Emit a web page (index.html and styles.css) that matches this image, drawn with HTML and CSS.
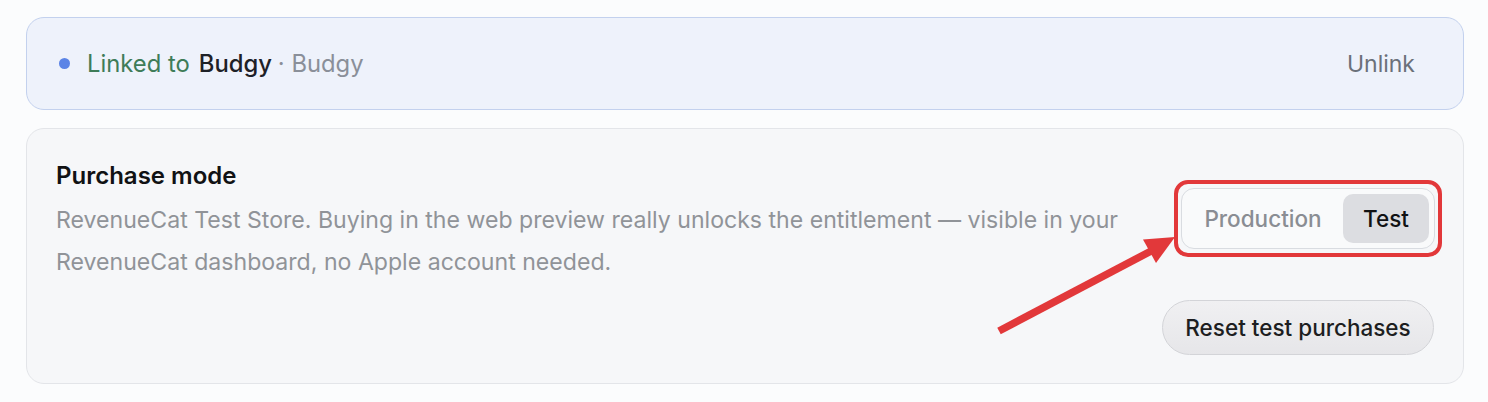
FILE: index.html
```html
<!DOCTYPE html>
<html lang="en">
<head>
<meta charset="utf-8">
<title>Purchase mode</title>
<link rel="stylesheet" href="styles.css">
</head>
<body>
<div class="page">
  <div class="link-card">
    <div class="link-status">
      <span class="dot"></span>
      <span class="linked">Linked to</span>
      <span class="app-name">Budgy</span>
      <span class="sub">· Budgy</span>
    </div>
    <button class="unlink">Unlink</button>
  </div>

  <div class="mode-card">
    <div class="mode-row">
      <div class="mode-text">
        <h2 class="mode-title">Purchase mode</h2>
        <p class="mode-desc">RevenueCat Test Store. Buying in the web preview really unlocks the entitlement — visible in your RevenueCat dashboard, no Apple account needed.</p>
      </div>
      <div class="mode-actions">
        <div class="seg-wrap">
          <div class="segmented">
            <button class="seg">Production</button>
            <button class="seg active">Test</button>
          </div>
          <div class="highlight"></div>
        </div>
        <button class="reset">Reset test purchases</button>
      </div>
    </div>
  </div>

  <svg class="arrow" width="1488" height="402" viewBox="0 0 1488 402">
    <line x1="999" y1="331" x2="1153" y2="250" stroke="#e2383a" stroke-width="7.5" stroke-linecap="butt"/>
    <polygon points="1175,237 1143,239.5 1156,263" fill="#e2383a"/>
  </svg>
</div>
</body>
</html>
```

FILE: styles.css
```css
* { box-sizing: border-box; }
html, body { margin: 0; padding: 0; }
body {
  background: #fbfcfd;
  font-family: Inter, "Noto Sans", "Liberation Sans", sans-serif;
  width: 1488px;
  height: 402px;
  overflow: hidden;
}
.page {
  position: relative;
  padding: 17px 24px 0 26px;
  display: flex;
  flex-direction: column;
  gap: 18px;
}
.link-card {
  height: 93px;
  background: #eef2fb;
  border: 1.5px solid #c3d1ee;
  border-radius: 18px;
  display: flex;
  align-items: center;
  justify-content: space-between;
  padding: 0 32px 0 32px;
}
.link-status {
  display: flex;
  align-items: center;
  font-size: 23.8px;
  white-space: pre;
}
.dot {
  width: 11px;
  height: 11px;
  border-radius: 50%;
  background: #5b84e6;
  margin-right: 17px;
}
.linked { color: #3e7c58; }
.app-name { color: #1e2127; font-weight: 500; margin-left: 9px; }
.sub { color: #8a8f99; margin-left: 6px; }
.unlink {
  background: none;
  border: none;
  font-family: inherit;
  font-size: 23px;
  color: #6b7079;
  padding: 8px 16px;
}
.mode-card {
  height: 256px;
  background: #f6f7f9;
  border: 1.5px solid #e3e5e9;
  border-radius: 18px;
  padding: 30px 28px 28px 29px;
}
.mode-row {
  display: flex;
  justify-content: space-between;
}
.mode-text { max-width: 1100px; }
.mode-title {
  margin: 0;
  font-size: 24px;
  font-weight: 600;
  line-height: 34px;
  color: #111214;
}
.mode-desc {
  margin: 6px 0 0;
  font-size: 23.1px;
  line-height: 42px;
  color: #909398;
}
.mode-actions {
  display: flex;
  flex-direction: column;
  align-items: flex-end;
  gap: 51px;
  padding-top: 29px;
}
.seg-wrap { position: relative; }
.segmented {
  display: flex;
  gap: 4px;
  padding: 5px;
  width: 254px;
  height: 61px;
  background: #f9fafb;
  border: 1.5px solid #d9dce1;
  border-radius: 13px;
}
.seg {
  flex: 1;
  border: none;
  background: none;
  font-family: inherit;
  font-size: 22.5px;
  font-weight: 500;
  color: #8a8d93;
  border-radius: 10px;
  padding: 0;
}
.seg.active {
  flex: 0 0 86px;
  background: #dcdde1;
  color: #111214;
}
.highlight {
  position: absolute;
  left: -7px;
  right: -7px;
  top: -8px;
  bottom: -8px;
  border: 4.5px solid #e2383a;
  border-radius: 14px;
  pointer-events: none;
}
.reset {
  width: 272px;
  height: 55px;
  border-radius: 28px;
  border: 1.5px solid #d3d4d8;
  background: linear-gradient(#f0f0f2, #e6e6e9);
  font-family: inherit;
  font-size: 22.5px;
  font-weight: 500;
  color: #1d1e21;
  margin-right: 1px;
}
.arrow {
  position: absolute;
  left: 0;
  top: 0;
  pointer-events: none;
}
```
